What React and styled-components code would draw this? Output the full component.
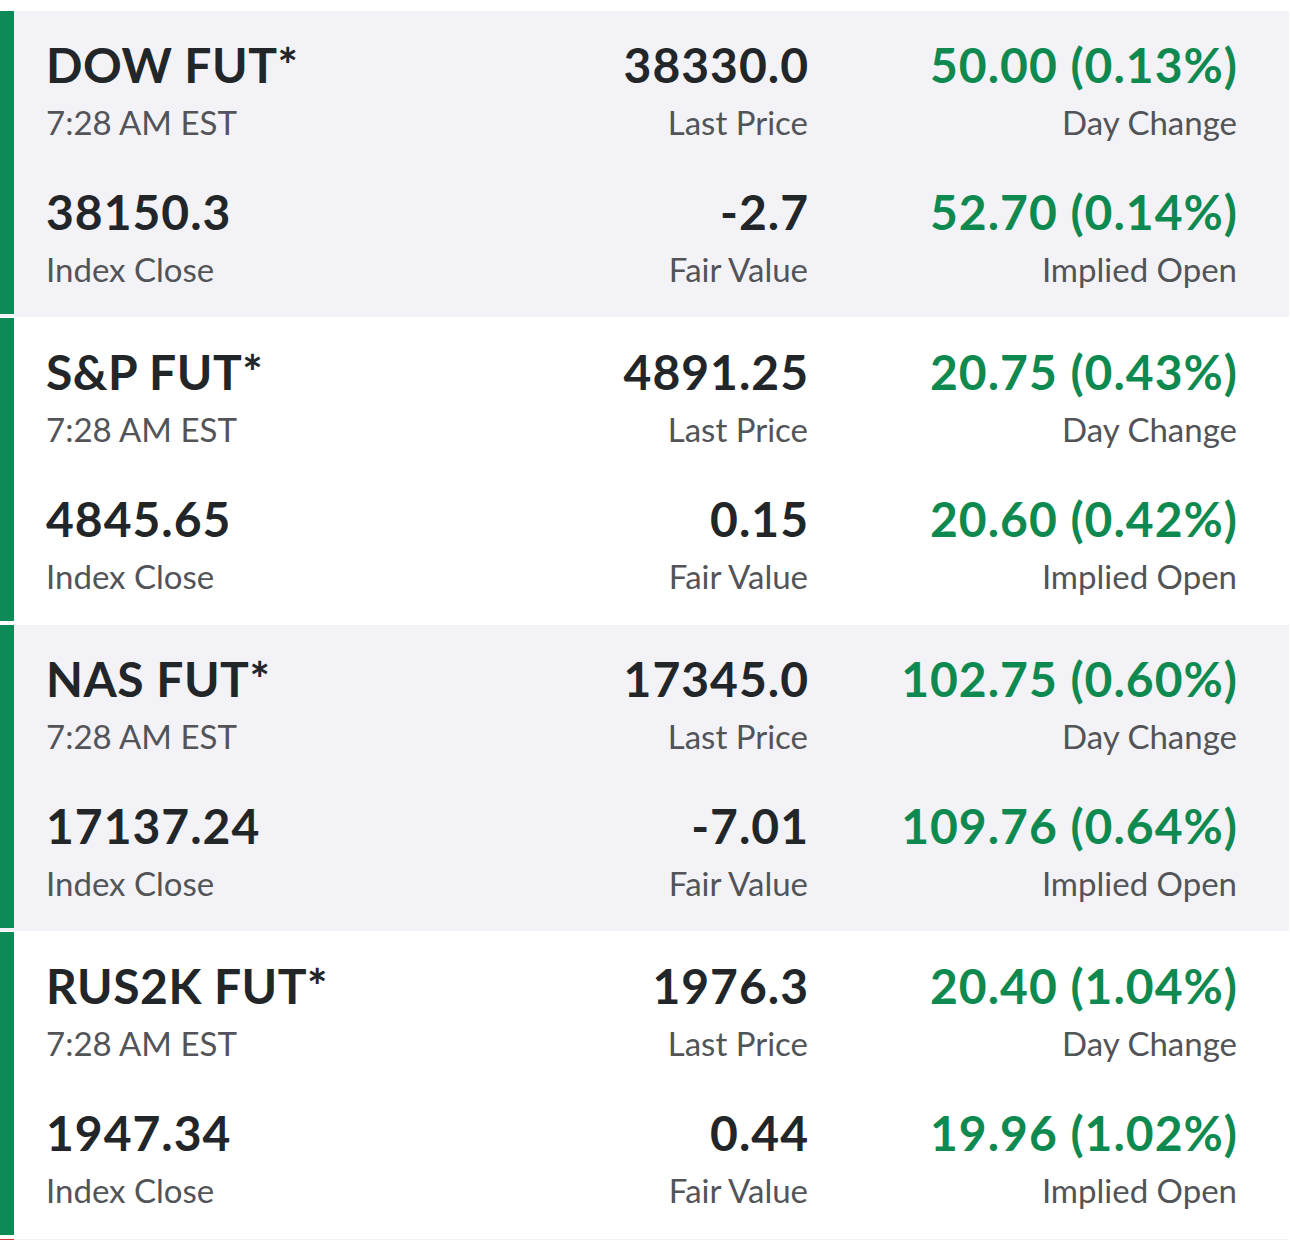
import styled, { createGlobalStyle } from 'styled-components';

const GlobalStyle = createGlobalStyle`
  html, body {
    margin: 0;
    padding: 0;
    background: #ffffff;
  }
  body {
    font-family: Lato, "Liberation Sans", sans-serif;
    -webkit-font-smoothing: antialiased;
  }
`;

const futures = [
  {
    name: 'DOW FUT*', time: '7:28 AM EST',
    last: '38330.0', change: '50.00 (0.13%)',
    close: '38150.3', fair: '-2.7', implied: '52.70 (0.14%)',
  },
  {
    name: 'S&P FUT*', time: '7:28 AM EST',
    last: '4891.25', change: '20.75 (0.43%)',
    close: '4845.65', fair: '0.15', implied: '20.60 (0.42%)',
  },
  {
    name: 'NAS FUT*', time: '7:28 AM EST',
    last: '17345.0', change: '102.75 (0.60%)',
    close: '17137.24', fair: '-7.01', implied: '109.76 (0.64%)',
  },
  {
    name: 'RUS2K FUT*', time: '7:28 AM EST',
    last: '1976.3', change: '20.40 (1.04%)',
    close: '1947.34', fair: '0.44', implied: '19.96 (1.02%)',
  },
];

const App = () => {
  return (
    <>
      <GlobalStyle />
      <List>
        {futures.map((f, i) => (
          <Card key={f.name} $shaded={i % 2 === 0}>
            <Bar />
            <Grid>
              <Cell>
                <Title>{f.name}</Title>
                <Label>{f.time}</Label>
              </Cell>
              <Cell $right>
                <Value>{f.last}</Value>
                <Label>Last Price</Label>
              </Cell>
              <Cell $right>
                <Value $up>{f.change}</Value>
                <Label>Day Change</Label>
              </Cell>
              <Cell>
                <Value>{f.close}</Value>
                <Label>Index Close</Label>
              </Cell>
              <Cell $right>
                <Value>{f.fair}</Value>
                <Label>Fair Value</Label>
              </Cell>
              <Cell $right>
                <Value $up>{f.implied}</Value>
                <Label>Implied Open</Label>
              </Cell>
            </Grid>
          </Card>
        ))}
        <Card $shaded>
          <Bar $down />
        </Card>
      </List>
    </>
  );
};

const List = styled.div`
  display: flex;
  flex-direction: column;
  gap: 1px;
  padding-top: 11px;
  width: 1289px;
`;

const Card = styled.div`
  display: flex;
  height: 306px;
  flex-shrink: 0;
  background: ${({ $shaded }) => ($shaded ? '#f3f3f7' : '#ffffff')};
`;

const Bar = styled.div`
  width: 14px;
  height: 303px;
  flex-shrink: 0;
  background: ${({ $down }) => ($down ? '#d3383a' : '#0d8a55')};
`;

const Grid = styled.div`
  flex: 1;
  display: grid;
  grid-template-columns: 1fr 240px 429px;
  grid-template-rows: 147px 1fr;
  padding: 0 52px 0 32px;
`;

const Cell = styled.div`
  display: flex;
  flex-direction: column;
  align-items: ${({ $right }) => ($right ? 'flex-end' : 'flex-start')};
  padding-top: 26px;
`;

const Value = styled.div`
  font-size: 48px;
  line-height: 56px;
  font-weight: 700;
  letter-spacing: 1px;
  margin-right: -1px;
  white-space: nowrap;
  color: ${({ $up }) => ($up ? '#0e8a50' : '#222629')};
`;

const Title = styled(Value)`
  letter-spacing: 0.5px;
`;

const Label = styled.div`
  margin-top: 9px;
  font-size: 33px;
  line-height: 40px;
  font-weight: 400;
  white-space: nowrap;
  color: #525458;
`;

export default App;
